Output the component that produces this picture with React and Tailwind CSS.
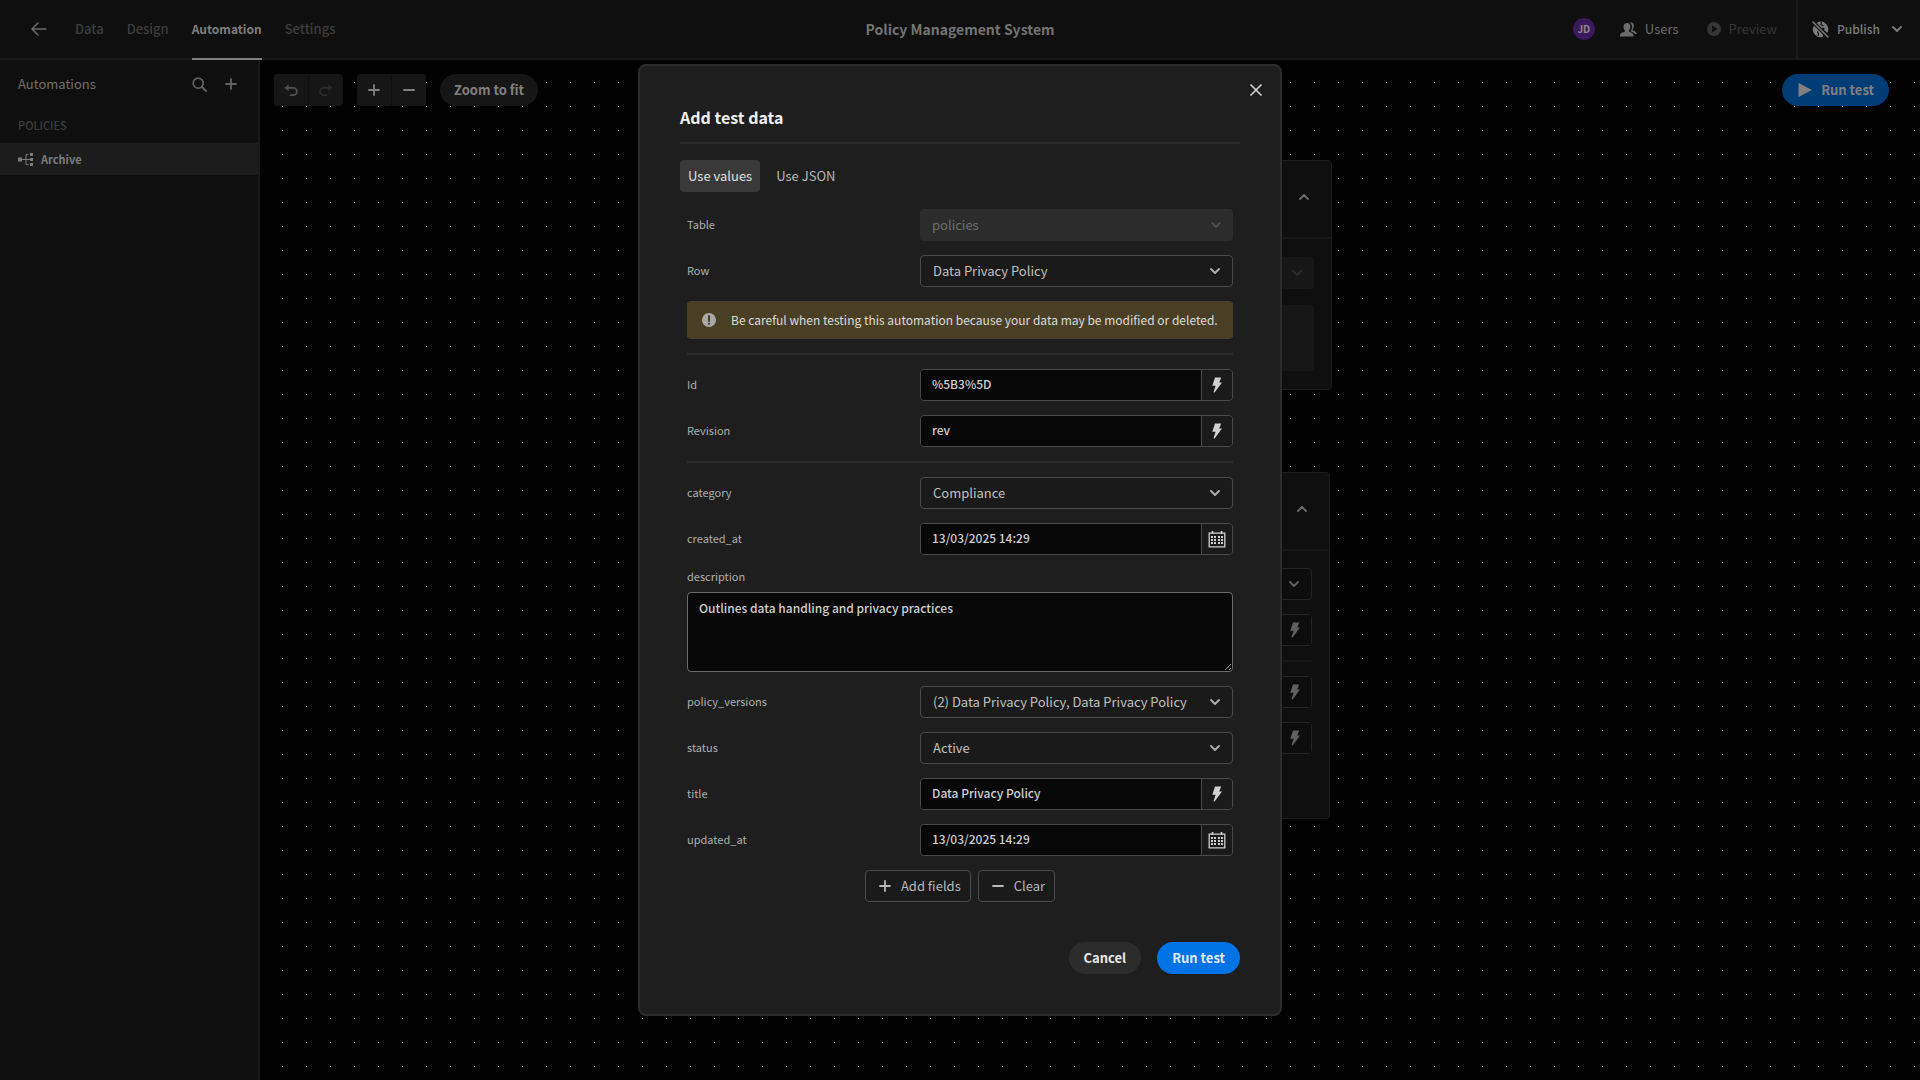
import { useState } from "react";

const navItems = ["Data", "Design", "Automation", "Settings"];

function ChevronDown({ className = "" }) {
  return (
    <svg className={className} width="10" height="6" viewBox="0 0 10 6" fill="none" aria-hidden="true">
      <path d="M1 1l4 4 4-4" stroke="currentColor" strokeWidth="1.8" strokeLinecap="round" strokeLinejoin="round" />
    </svg>
  );
}

function ChevronUp({ className = "" }) {
  return (
    <svg className={className} width="10" height="6" viewBox="0 0 10 6" fill="none" aria-hidden="true">
      <path d="M1 5l4-4 4 4" stroke="currentColor" strokeWidth="1.8" strokeLinecap="round" strokeLinejoin="round" />
    </svg>
  );
}

function BoltIcon() {
  return (
    <svg width="10" height="16" viewBox="0 0 10 16" fill="currentColor" aria-hidden="true">
      <path d="M3 0.5h6.2L7.2 5.4H10L2.6 15.6l-1.1-.4L3.6 8.8H0.3z" />
    </svg>
  );
}

function CalendarIcon() {
  return (
    <svg width="18" height="18" viewBox="0 0 18 18" fill="none" aria-hidden="true">
      <path d="M1.2 3.2h15.6v13.6H1.2z" stroke="currentColor" strokeWidth="1.3" />
      <path d="M4.5 1v3M13.5 1v3" stroke="currentColor" strokeWidth="1.7" />
      <path
        d="M3 6h2v2H3zM6 6h2v2H6zM10 6h2v2h-2zM13 6h2v2h-2zM3 9h2v2H3zM6 9h2v2H6zM10 9h2v2h-2zM13 9h2v2h-2zM3 12h2v2H3zM6 12h2v2H6zM10 12h2v2h-2zM13 12h2v2h-2z"
        fill="currentColor"
      />
    </svg>
  );
}

function PlusIcon() {
  return (
    <svg width="12" height="12" viewBox="0 0 12 12" fill="none" aria-hidden="true">
      <path d="M6 1v10M1 6h10" stroke="currentColor" strokeWidth="1.8" strokeLinecap="round" />
    </svg>
  );
}

function MinusIcon() {
  return (
    <svg width="12" height="12" viewBox="0 0 12 12" fill="none" aria-hidden="true">
      <path d="M1 6h10" stroke="currentColor" strokeWidth="1.8" strokeLinecap="round" />
    </svg>
  );
}

function UndoIcon({ className = "" }) {
  return (
    <svg className={className} width="14" height="13" viewBox="0 0 14 13" fill="none" aria-hidden="true">
      <path d="M4.6 0.4v6.8L0.4 3.8z" fill="currentColor" />
      <path d="M4 3.8h5.2a3.7 3.7 0 0 1 0 7.4H6.6" stroke="currentColor" strokeWidth="1.8" strokeLinecap="round" />
    </svg>
  );
}

function Header() {
  return (
    <header className="grid h-[60px] shrink-0 grid-cols-[1fr_auto_1fr] border-b-2 border-[#191919] bg-[#0f0f0f]">
      <div className="flex items-center gap-7 pl-[31px]">
        <button type="button" aria-label="Back" className="text-[#6c6c6c]">
          <svg width="16" height="14" viewBox="0 0 16 14" fill="none" aria-hidden="true">
            <path d="M15 7H1.2M7 1L1 7l6 6" stroke="currentColor" strokeWidth="1.5" strokeLinecap="round" strokeLinejoin="round" />
          </svg>
        </button>
        <nav className="-mb-0.5 flex h-[60px] gap-[23px]">
          {navItems.map((item) => (
            <a
              key={item}
              href="#"
              className={
                item === "Automation"
                  ? "border-b-2 border-[#7f7f7f] pt-[18px] text-xs leading-[22px] font-bold text-[#7f7f7f]"
                  : "pt-[18px] text-[13px] leading-[22px] font-medium text-[#3e3e3e]"
              }
            >
              {item}
            </a>
          ))}
        </nav>
      </div>
      <h1 className="self-center text-sm leading-6 font-bold text-[#747474]">Policy Management System</h1>
      <div className="flex items-center justify-end text-[13px] leading-[22px]">
        <span className="flex size-[22px] items-center justify-center rounded-full bg-[#3a1a5c] text-[10px] font-bold text-[#8c8c8c]">
          JD
        </span>
        <button type="button" className="ml-[25px] flex items-center gap-2 text-[#6c6c6c]">
          <svg width="17" height="15" viewBox="0 0 17 15" fill="currentColor" aria-hidden="true">
            <path d="M7 1c2 0 3.4 1.6 3.4 3.8 0 1.6-.6 2.9-1.4 3.6v.9c0 .4.3.6.7.8 2.4.8 3.8 1.6 3.8 3.3v1H0v-1c0-1.7 1.5-2.5 4.2-3.3.4-.2.7-.4.7-.8v-.9C4.1 7.7 3.5 6.4 3.5 4.8 3.5 2.6 5 1 7 1z" />
            <path d="M9.8.7C10.2.5 10.6.4 11 .4c1.7 0 2.9 1.4 2.9 3.3 0 1.5-.6 2.6-1.3 3.2v.9c0 .3.2.5.5.6 2 .7 3.300 1.400 3.500 2.900v.7h-1.800c-.7-1.300-2.100-1.900-3.900-2.600v-.5c.8-1 1.200-2.300 1.200-3.800 0-1.800-.8-3.500-2.300-4.400z" />
          </svg>
          Users
        </button>
        <button type="button" className="ml-7 flex items-center gap-2 text-[#363636]">
          <svg width="14" height="14" viewBox="0 0 14 14" fill="currentColor" aria-hidden="true">
            <path fillRule="evenodd" d="M7 0a7 7 0 1 1 0 14A7 7 0 0 1 7 0zM5 3.5v7L10.5 7z" />
          </svg>
          Preview
        </button>
        <div className="ml-[19px] flex h-[58px] items-center border-l-2 border-[#191919] pr-[18px] pl-[14px] text-[#7c7c7c]">
          <button type="button" className="flex items-center gap-2 text-xs leading-[22px] font-medium">
            {/* globe with a strike through it */}
            <svg width="17" height="17" viewBox="0 0 17 17" fill="none" aria-hidden="true">
              <path d="M4.800 1.900A7.500 7.500 0 0 1 15.200 12.100L11.800 8.600l1.200-1.400-2.200-.8-.7 1z" fill="currentColor" />
              <path d="M2 4.700l8.600 8.500.6 2.300A7.500 7.500 0 0 1 2 4.700z" fill="currentColor" />
              <path d="M1 1l15 15" stroke="currentColor" strokeWidth="1.500" strokeLinecap="round" />
              <path d="M9.500 1l-.6 2.500 2.600 1.600M5.500 10.500l1 2.500-.5 2" stroke="#0f0f0f" strokeWidth="1.200" />
            </svg>
            Publish
            <ChevronDown className="ml-1" />
          </button>
        </div>
      </div>
    </header>
  );
}

function Sidebar() {
  return (
    <aside className="w-[260px] shrink-0 border-r-2 border-[#191919] bg-[#0f0f0f]">
      <div className="flex h-12 items-center justify-between pr-[21px] pl-[18px]">
        <h2 className="text-[13px] leading-[22px] text-[#707070]">Automations</h2>
        <div className="flex items-center gap-[18px] text-[#636363]">
          <button type="button" aria-label="Search automations">
            <svg width="15" height="15" viewBox="0 0 15 15" fill="none" aria-hidden="true">
              <circle cx="6.2" cy="6.2" r="5" stroke="currentColor" strokeWidth="1.7" />
              <path d="M10 10l4 4" stroke="currentColor" strokeWidth="1.9" strokeLinecap="round" />
            </svg>
          </button>
          <button type="button" aria-label="Add automation">
            <PlusIcon />
          </button>
        </div>
      </div>
      <h3 className="mt-2 mb-2 pl-[18px] text-[11px] leading-[19px] font-medium text-[#3e3e3e]">POLICIES</h3>
      <a href="#" className="flex h-8 items-center gap-2 bg-[#1c1c1c] pl-[18px] text-[11px] font-bold text-[#7c7c7c]">
        <svg width="15" height="13" viewBox="0 0 15 13" fill="currentColor" aria-hidden="true">
          <path d="M0 4.500h4v4H0zM12 0h3v3h-3zM12 5h3v3h-3zM12 10h3v3h-3z" />
          <path d="M4 6.500h8M10.500 1.500H8v10h2.500" fill="none" stroke="currentColor" strokeWidth="1" />
        </svg>
        Archive
      </a>
    </aside>
  );
}

function BlockBinding() {
  return (
    <div className="flex h-8 justify-end rounded border border-[#242424] bg-[#050505]">
      <span className="flex w-[34px] items-center justify-center border-l border-[#242424] bg-[#0d0d0d] text-[#606060]">
        <BoltIcon />
      </span>
    </div>
  );
}

function Canvas() {
  return (
    <main className="relative min-w-0 flex-1 bg-[#020202]">
      {/* dot grid */}
      <svg className="absolute inset-0 size-full" aria-hidden="true">
        <pattern id="dots" x="22" y="22" width="24" height="24" patternUnits="userSpaceOnUse">
          <rect width="1" height="1" fill="#848484" />
        </pattern>
        <rect width="100%" height="100%" fill="url(#dots)" />
      </svg>

      <div className="absolute inset-x-0 top-0 flex items-center gap-[14px] py-[14px] pr-[31px] pl-[14px] text-[13px] text-[#808080]">
        <div className="flex gap-px overflow-hidden rounded bg-[#0f0f0f]">
          <button type="button" aria-label="Undo" className="flex h-8 w-[34px] items-center justify-center bg-[#161616] text-[#505050]">
            <UndoIcon />
          </button>
          <button type="button" aria-label="Redo" disabled className="flex h-8 w-[34px] items-center justify-center bg-[#161616] text-[#2c2c2c]">
            <UndoIcon className="-scale-x-100" />
          </button>
        </div>
        <div className="flex gap-px overflow-hidden rounded bg-[#0f0f0f]">
          <button type="button" aria-label="Zoom in" className="flex h-8 w-[34px] items-center justify-center bg-[#161616]">
            <PlusIcon />
          </button>
          <button type="button" aria-label="Zoom out" className="flex h-8 w-[34px] items-center justify-center bg-[#161616]">
            <MinusIcon />
          </button>
        </div>
        <button type="button" className="h-8 rounded-full bg-[#161616] px-[14px] font-bold">
          Zoom to fit
        </button>
        <button type="button" className="ml-auto flex h-8 items-center gap-[9px] rounded-full bg-[#003c76] pr-[15px] pl-4 font-bold">
          <svg width="14" height="14" viewBox="0 0 14 14" fill="currentColor" aria-hidden="true">
            <path d="M0.5 0v14L14 7z" />
          </svg>
          Run test
        </button>
      </div>

      {/* flow blocks */}
      <div className="relative flex flex-col items-center gap-[82px] pt-[100px]">
        <section className="w-[484px] rounded border border-[#1c1c1c] bg-[#0f0f0f]">
          <div className="flex h-[78px] items-center justify-end border-b-2 border-[#171717] pr-[22px] pb-1 text-[#6c6c6c]">
            <ChevronUp />
          </div>
          <div className="flex flex-col gap-4 px-[17px] py-[18px]">
            <div className="flex h-8 items-center justify-end rounded bg-[#171717] pr-3 text-[#2c2c2c]">
              <ChevronDown />
            </div>
            <div className="h-[66px] rounded bg-[#171717]" />
          </div>
        </section>
        <section className="w-[480px] rounded border border-[#1c1c1c] bg-[#0f0f0f] pb-[64px]">
          <div className="flex h-[78px] items-center justify-end border-b-2 border-[#171717] pr-[22px] pb-1 text-[#6c6c6c]">
            <ChevronUp />
          </div>
          <div className="flex flex-col gap-[14px] px-[17px] pt-[17px]">
            <div className="flex h-8 items-center justify-end rounded border border-[#242424] bg-[#0d0d0d] pr-3 text-[#606060]">
              <ChevronDown />
            </div>
            <BlockBinding />
            <hr className="border-t-2 border-[#171717]" />
            <BlockBinding />
            <BlockBinding />
          </div>
        </section>
      </div>
    </main>
  );
}

function FieldRow({ id, label, children }) {
  return (
    <div className="flex items-center">
      <label htmlFor={id} className="flex-1 pb-0.5 text-[11px] leading-4 text-[#b0b0b0]">
        {label}
      </label>
      <div className="w-[313px]">{children}</div>
    </div>
  );
}

function SelectField({ id, label, value, disabled }) {
  return (
    <FieldRow id={id} label={label}>
      <div className="relative">
        <select
          id={id}
          disabled={disabled}
          defaultValue={value}
          className={
            disabled
              ? "block h-8 w-full appearance-none rounded bg-[#2c2c2c] px-3 text-[13px] text-[#6e6e6e] opacity-100"
              : "block h-8 w-full appearance-none rounded border border-[#4a4a4a] bg-[#1a1a1a] px-3 text-[13px] text-[#c0c0c0]"
          }
        >
          <option>{value}</option>
        </select>
        <span
          className={
            disabled
              ? "pointer-events-none absolute inset-y-0 right-3 flex items-center text-[#4e4e4e]"
              : "pointer-events-none absolute inset-y-0 right-[13px] flex items-center text-[#b0b0b0]"
          }
        >
          <ChevronDown />
        </span>
      </div>
    </FieldRow>
  );
}

function TextField({ id, label, value, onChange, icon = "bolt" }) {
  return (
    <FieldRow id={id} label={label}>
      <div className="flex h-8 overflow-hidden rounded border border-[#4a4a4a]">
        <input
          id={id}
          type="text"
          value={value}
          onChange={(e) => onChange(id, e.target.value)}
          className="min-w-0 flex-1 bg-[#080808] px-[11px] pb-0.5 text-xs font-medium text-[#d0d0d0] outline-none"
        />
        <button
          type="button"
          aria-label={icon === "bolt" ? "Bind value" : "Pick date"}
          className="flex w-[31px] items-center justify-center border-l border-[#4a4a4a] bg-[#1a1a1a] text-[#d0d0d0]"
        >
          {icon === "bolt" ? <BoltIcon /> : <CalendarIcon />}
        </button>
      </div>
    </FieldRow>
  );
}

function TestDataModal() {
  const [tab, setTab] = useState("values");
  const [row, setRow] = useState({
    id: "%5B3%5D",
    revision: "rev",
    created_at: "13/03/2025 14:29",
    description: "Outlines data handling and privacy practices",
    title: "Data Privacy Policy",
    updated_at: "13/03/2025 14:29",
  });

  const handleChange = (key, value) => setRow({ ...row, [key]: value });

  const tabClass = (name) =>
    tab === name
      ? "h-8 rounded bg-[#393939] px-2 text-[#e0e0e0]"
      : "h-8 rounded px-2 text-[#b8b8b8]";

  return (
    <div className="fixed inset-0 flex items-center justify-center">
      <div
        role="dialog"
        aria-labelledby="modal-title"
        className="relative w-[644px] rounded-lg border-2 border-[#2c2c2c] bg-[#1e1e1e] p-10"
      >
        <button type="button" aria-label="Close" className="absolute top-[18px] right-[18px] text-[#d0d0d0]">
          <svg width="12" height="12" viewBox="0 0 12 12" fill="none" aria-hidden="true">
            <path d="M1 1l10 10M11 1L1 11" stroke="currentColor" strokeWidth="1.7" strokeLinecap="round" />
          </svg>
        </button>

        <h2 id="modal-title" className="mb-[14px] text-base leading-[22px] font-bold text-[#f0f0f0]">
          Add test data
        </h2>
        <hr className="border-t-2 border-[#2c2c2c]" />

        <div className="mt-4 flex gap-2 text-[13px]">
          <button type="button" className={tabClass("values")} onClick={() => setTab("values")}>
            Use values
          </button>
          <button type="button" className={tabClass("json")} onClick={() => setTab("json")}>
            Use JSON
          </button>
        </div>

        <form className="mt-[17px] flex flex-col gap-[14px] px-[7px]">
          <SelectField id="table" label="Table" value="policies" disabled />
          <SelectField id="row" label="Row" value="Data Privacy Policy" />

          <div className="flex h-[38px] items-center gap-[15px] rounded bg-[#4a3f25] pl-[15px] text-xs text-[#dcdcdc]">
            <svg width="14" height="14" viewBox="0 0 14 14" aria-hidden="true">
              <circle cx="7" cy="7" r="7" fill="#a8a8a8" />
              <path d="M7 3v5" stroke="#4a3f25" strokeWidth="2" strokeLinecap="round" />
              <circle cx="7" cy="10.8" r="1.1" fill="#4a3f25" />
            </svg>
            <p>Be careful when testing this automation because your data may be modified or deleted.</p>
          </div>

          <hr className="border-t-2 border-[#2c2c2c]" />
          <TextField id="id" label="Id" value={row.id} onChange={handleChange} />
          <TextField id="revision" label="Revision" value={row.revision} onChange={handleChange} />
          <hr className="border-t-2 border-[#2c2c2c]" />

          <SelectField id="category" label="category" value="Compliance" />
          <TextField id="created_at" label="created_at" value={row.created_at} onChange={handleChange} icon="calendar" />

          <div className="flex flex-col gap-[7px]">
            <label htmlFor="description" className="pb-0.5 text-[11px] leading-[14px] text-[#b0b0b0]">
              description
            </label>
            <textarea
              id="description"
              value={row.description}
              onChange={(e) => handleChange("description", e.target.value)}
              className="block h-20 w-full resize-y rounded border border-[#6a6a6a] bg-[#080808] px-[11px] py-[5px] text-xs leading-5 font-medium text-[#d0d0d0] outline-none"
            />
          </div>

          <SelectField id="policy_versions" label="policy_versions" value="(2) Data Privacy Policy, Data Privacy Policy" />
          <SelectField id="status" label="status" value="Active" />
          <TextField id="title" label="title" value={row.title} onChange={handleChange} />
          <TextField id="updated_at" label="updated_at" value={row.updated_at} onChange={handleChange} icon="calendar" />

          <div className="flex justify-center gap-[7px] text-[13px] text-[#b8b8b8]">
            <button type="button" className="flex h-8 items-center gap-[10px] rounded border border-[#4a4a4a] bg-[#1a1a1a] pr-[9px] pl-[13px]">
              <PlusIcon />
              Add fields
            </button>
            <button type="button" className="flex h-8 items-center gap-[10px] rounded border border-[#4a4a4a] bg-[#1a1a1a] pr-[9px] pl-[13px]">
              <MinusIcon />
              Clear
            </button>
          </div>
        </form>

        <div className="mt-10 flex justify-end gap-4 text-[13px] font-bold text-[#e8e8e8]">
          <button type="button" className="h-8 rounded-full bg-[#2c2c2c] px-[15px]">
            Cancel
          </button>
          <button type="button" className="h-8 rounded-full bg-[#0073e6] px-[15px]">
            Run test
          </button>
        </div>
      </div>
    </div>
  );
}

export default function App() {
  return (
    <div className="flex min-h-screen flex-col bg-[#020202] font-['Noto_Sans_CJK_SC','Source_Sans_3',sans-serif]">
      <Header />
      <div className="flex flex-1">
        <Sidebar />
        <Canvas />
      </div>
      <TestDataModal />
    </div>
  );
}
